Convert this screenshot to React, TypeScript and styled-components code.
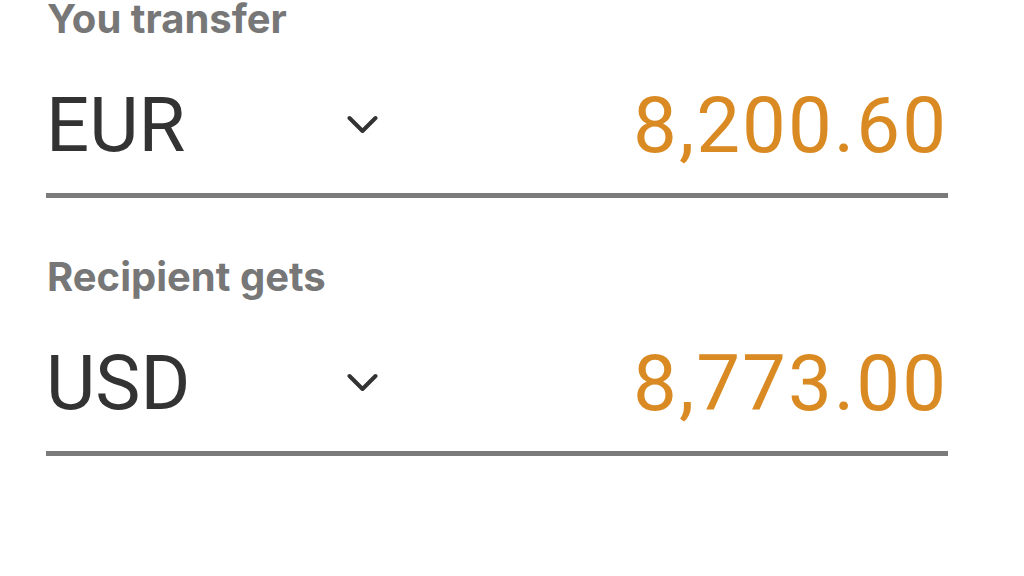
import React from 'react';
import styled, { createGlobalStyle } from 'styled-components';

const GlobalStyle = createGlobalStyle`
  html, body {
    margin: 0;
    padding: 0;
    background: #ffffff;
  }
  body {
    width: 1024px;
    height: 576px;
    overflow: hidden;
  }
`;

const Page = styled.div`
  padding: 0 76px 0 46px;
  display: flex;
  flex-direction: column;
`;

const Section = styled.section<{ $first?: boolean }>`
  display: flex;
  flex-direction: column;
  margin-top: ${(p) => (p.$first ? '-3px' : '57px')};
`;

const Label = styled.div`
  font-family: Inter, 'Liberation Sans', sans-serif;
  font-weight: 700;
  font-size: 40px;
  line-height: 44px;
  color: #777777;
  padding-left: 1px;
`;

const Field = styled.div`
  display: flex;
  align-items: center;
  height: 157px;
  padding-top: 16px;
  border-bottom: 5px solid #7b7b7b;
  box-sizing: border-box;
`;

const Currency = styled.div`
  font-family: Roboto, 'DejaVu Sans', sans-serif;
  font-size: 76px;
  color: #333333;
  width: 301px;
`;

const Chevron = styled.svg`
  width: 31px;
  height: 20px;
  color: #333333;
`;

const Amount = styled.div`
  margin-left: auto;
  font-family: Roboto, 'DejaVu Sans', sans-serif;
  font-size: 78px;
  letter-spacing: 2px;
  color: #d98a22;
`;

const Row = ({ label, currency, amount, first }: { label: string; currency: string; amount: string; first?: boolean }) => (
  <Section $first={first}>
    <Label>{label}</Label>
    <Field>
      <Currency>{currency}</Currency>
      <Chevron viewBox="0 0 31 20" fill="none">
        <path d="M2.5 3 L15.5 16 L28.5 3" stroke="currentColor" strokeWidth="4" strokeLinecap="round" strokeLinejoin="round" />
      </Chevron>
      <Amount>{amount}</Amount>
    </Field>
  </Section>
);

export default function App() {
  return (
    <>
      <GlobalStyle />
      <Page>
        <Row label="You transfer" currency="EUR" amount="8,200.60" first />
        <Row label="Recipient gets" currency="USD" amount="8,773.00" />
      </Page>
    </>
  );
}
